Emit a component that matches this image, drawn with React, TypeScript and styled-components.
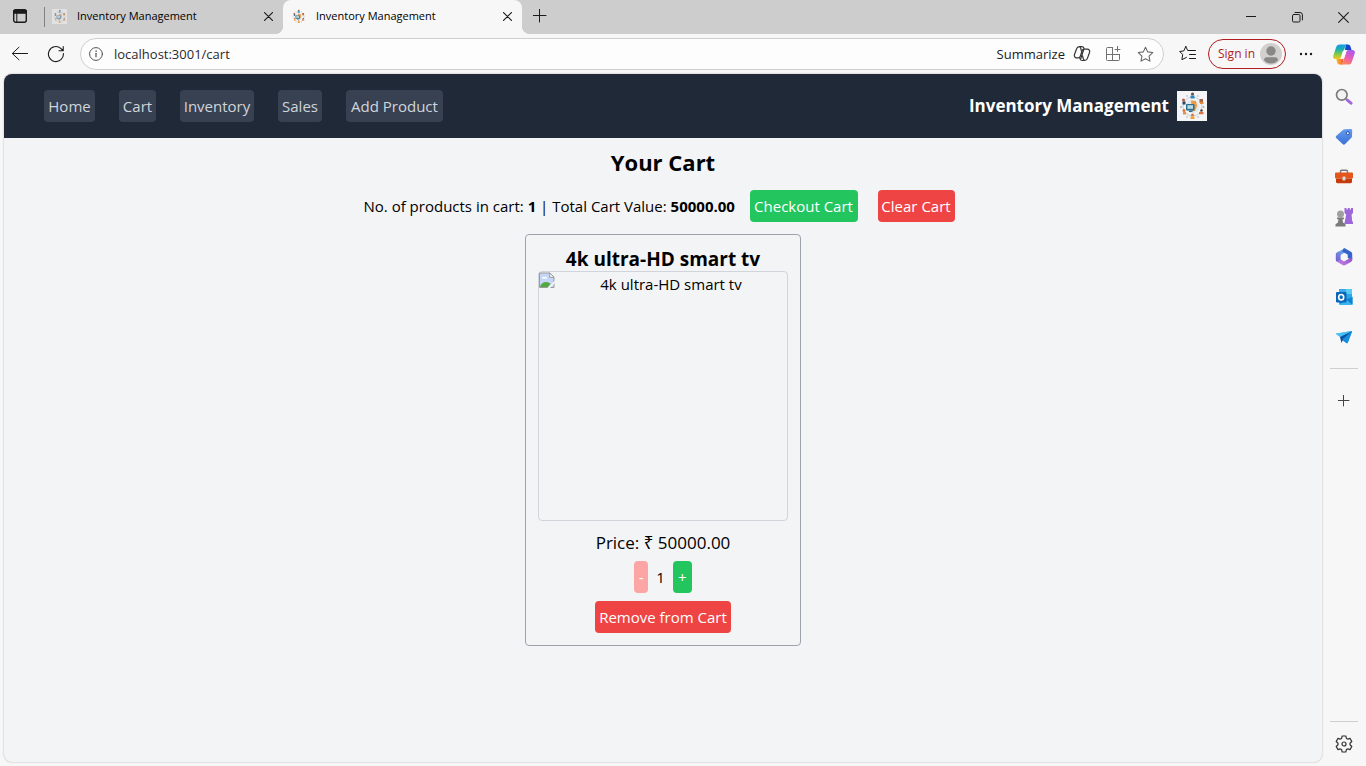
import React from "react";
import styled, { createGlobalStyle } from "styled-components";

const GlobalStyle = createGlobalStyle`
  *, *::before, *::after { box-sizing: border-box; }
  body {
    margin: 0;
    background: #f7f7f7;
    color: #000;
    font-family: "Segoe UI", "Open Sans", "Noto Sans", sans-serif;
    font-size: 15px;
    line-height: 24px;
  }
  button, input { font: inherit; color: inherit; }
  button { border: 0; padding: 0; background: none; cursor: pointer; }
  svg { display: block; flex: none; }
  h1, h2, p, figure { margin: 0; }
`;

/* ---------- browser frame ---------- */

const Window = styled.div`
  min-height: 100vh;
  display: flex;
  flex-direction: column;
`;

const TabStrip = styled.header`
  display: flex;
  height: 34px;
  background: #cdcdcd;
`;

const TabGroup = styled.div`
  display: flex;
  flex: 1;
  min-width: 0;
  margin-left: 4px;
`;

const IconButton = styled.button<{ $width: number; $height?: number }>`
  display: flex;
  align-items: center;
  justify-content: center;
  flex: none;
  width: ${(p) => p.$width}px;
  height: ${(p) => p.$height ?? 32}px;
`;

const Tab = styled.div<{ $active?: boolean }>`
  position: relative;
  display: flex;
  align-items: center;
  flex: 0 1 239px;
  gap: 10px;
  padding: 0 8px 2px;
  font-size: 11px;
  line-height: 16px;
  background: ${(p) => (p.$active ? "#f7f7f7" : "transparent")};
  border-radius: 8px 8px 0 0;

  &::before,
  &::after {
    content: "";
    display: ${(p) => (p.$active ? "block" : "none")};
    position: absolute;
    bottom: 0;
    width: 8px;
    height: 8px;
  }
  &::before {
    right: 100%;
    background: radial-gradient(circle at 0 0, transparent 8px, #f7f7f7 8px);
  }
  &::after {
    left: 100%;
    background: radial-gradient(circle at 100% 0, transparent 8px, #f7f7f7 8px);
  }
`;

const TabTitle = styled.span`
  flex: 1;
  min-width: 0;
  overflow: hidden;
  white-space: nowrap;
`;

const TabDivider = styled.span`
  align-self: center;
  width: 1px;
  height: 20px;
  margin-right: -1px;
  background: #808080;
`;

const Favicon = styled.span<{ $faded?: boolean }>`
  opacity: ${(p) => (p.$faded ? 0.6 : 1)};
`;

const Toolbar = styled.div`
  display: flex;
  align-items: center;
  height: 40px;
  padding-left: 2px;
`;

const AddressBar = styled.form`
  display: flex;
  align-items: center;
  flex: 1;
  min-width: 0;
  height: 32px;
  margin: 0 8px 0 6px;
  padding: 0 2px 0 0;
  background: #fdfdfd;
  border: 1px solid #cfcfcf;
  border-radius: 16px;
`;

const AddressInput = styled.input`
  flex: 1;
  min-width: 0;
  padding: 0 3px;
  border: 0;
  outline: 0;
  background: none;
  color: #2b2b2b;
  font-size: 13px;
`;

const SummarizeButton = styled.button`
  display: flex;
  align-items: center;
  gap: 8px;
  padding-right: 6px;
  font-size: 13px;
  color: #1b1b1b;
`;

const SignInButton = styled.button`
  display: flex;
  align-items: center;
  justify-content: space-between;
  width: 78px;
  height: 30px;
  margin: 0 4px;
  padding: 0 3px 0 9px;
  border: 1px solid #b01c20;
  border-radius: 15px;
  color: #b01c20;
  font-size: 12px;
  white-space: nowrap;
`;

const Body = styled.div`
  display: flex;
  flex: 1;
`;

const Sidebar = styled.aside`
  display: flex;
  flex-direction: column;
  align-items: center;
  width: 44px;
  padding: 3px 0 2px;
`;

const SidebarRule = styled.hr`
  width: 28px;
  height: 1px;
  margin: 11px 0 12px;
  border: 0;
  background: #cfcfcf;
`;

const SidebarFooter = styled.div`
  display: flex;
  flex-direction: column;
  align-items: center;
  margin-top: auto;
  ${SidebarRule} { margin: 0 0 2px; }
`;

/* ---------- page ---------- */

const Page = styled.div`
  flex: 1;
  min-width: 0;
  margin: 0 0 4px 4px;
  overflow: hidden;
  background: #f3f4f6;
  border-radius: 8px;
  box-shadow: 0 0 2px rgba(0, 0, 0, 0.3);
`;

const NavBar = styled.nav`
  display: flex;
  align-items: center;
  justify-content: space-between;
  height: 64px;
  padding: 0 115px 0 40px;
  background: #1f2937;
`;

const NavList = styled.div`
  display: flex;
  gap: 24px;
`;

const NavLink = styled.a<{ $width: number }>`
  display: block;
  min-width: ${(p) => p.$width}px;
  padding: 4px 0;
  border-radius: 4px;
  background: #374151;
  color: #d1d5db;
  text-align: center;
  text-decoration: none;
  white-space: nowrap;
`;

const Brand = styled.div`
  display: flex;
  align-items: center;
  gap: 8px;
  color: #fff;
  font-size: 17px;
  font-weight: 700;
  line-height: 28px;
  white-space: nowrap;
`;

const Main = styled.main`
  display: flex;
  flex-direction: column;
  align-items: center;
  gap: 12px;
  padding-top: 8px;
`;

const Title = styled.h1`
  font-size: 22px;
  line-height: 32px;
  font-weight: 700;
`;

const Summary = styled.div`
  display: flex;
  align-items: center;
  gap: 12px;
`;

const SummaryText = styled.p`
  min-width: 374px;
`;

const SummaryActions = styled.div`
  display: flex;
  gap: 20px;
  padding-right: 8px;
`;

const ActionButton = styled.button<{ $tone: "green" | "red"; $width: number }>`
  min-width: ${(p) => p.$width}px;
  height: 32px;
  border-radius: 4px;
  background: ${(p) => (p.$tone === "green" ? "#22c55e" : "#ef4444")};
  color: #fff;
  white-space: nowrap;
  &:disabled { background: #fca5a5; cursor: not-allowed; }
`;

const Card = styled.article`
  display: flex;
  flex-direction: column;
  align-items: center;
  padding: 12px;
  border: 1px solid #9ca3af;
  border-radius: 4px;
`;

const ProductName = styled.h2`
  font-size: 19px;
  line-height: 24px;
  font-weight: 700;
`;

const ProductImage = styled.figure`
  display: flex;
  width: 250px;
  height: 250px;
  border: 1px solid #d1d5db;
  border-radius: 4px;
`;

const AltText = styled.figcaption`
  flex: 1;
  text-align: center;
`;

const Price = styled.p`
  margin: 8px 0 4px;
  font-size: 17px;
  line-height: 28px;
`;

const Quantity = styled.div`
  display: flex;
  align-items: center;
  gap: 8px;
  margin-bottom: 8px;
`;

/* ---------- icons ---------- */

const line = { fill: "none", stroke: "#1b1b1b", strokeLinecap: "round", strokeLinejoin: "round" } as const;

const TabActionsIcon = () => (
  <svg width="16" height="16" viewBox="0 0 16 16" {...line} strokeWidth="1.4">
    <rect x="1.7" y="1.7" width="12.6" height="12.6" rx="2" />
    <path d="M2 2.5h12v2.6H2z" fill="#1b1b1b" />
    <path d="M4.8 5v9" strokeWidth="1" />
  </svg>
);

const CloseIcon = ({ size = 9 }: { size?: number }) => (
  <svg width={size} height={size} viewBox="0 0 10 10" {...line} strokeWidth={size > 9 ? 1 : 1.3}>
    <path d="M.6.6l8.8 8.8M9.4.6L.6 9.4" />
  </svg>
);

const PlusIcon = ({ size = 14, color = "#1b1b1b" }: { size?: number; color?: string }) => (
  <svg width={size} height={size} viewBox={`0 0 ${size} ${size}`} {...line} stroke={color}>
    <path d={`M${Math.floor(size / 2) - 0.5} 0v${size - 1}M0 ${Math.floor(size / 2) - 0.5}h${size - 1}`} />
  </svg>
);

const MinimizeIcon = () => (
  <svg width="10" height="10" viewBox="0 0 10 10" {...line}><path d="M0 4.5h10" /></svg>
);

const RestoreIcon = () => (
  <svg width="11" height="11" viewBox="0 0 11 11" {...line}>
    <rect x=".5" y="2.5" width="7.5" height="7.5" rx="1.2" />
    <path d="M3 .5h5a2.4 2.4 0 012.4 2.4v5" />
  </svg>
);

const BackIcon = () => (
  <svg width="18" height="16" viewBox="0 0 18 16" {...line} strokeWidth="1">
    <path d="M16.500 7.500H1.500M8 1.200L1.300 7.500 8 13.800" />
  </svg>
);

const RefreshIcon = () => (
  <svg width="18" height="18" viewBox="0 0 18 18" {...line} strokeWidth="1.1">
    <path d="M16.400 8.500a7.500 7.500 0 11-2.700-5.200l2.300 2.200M16.200 1.500v4.200h-4.200" />
  </svg>
);

const InfoIcon = () => (
  <svg width="14" height="14" viewBox="0 0 14 14" {...line} stroke="#555">
    <circle cx="7" cy="7" r="6.4" />
    <path d="M7 6.3v3.500" strokeWidth="1.2" />
    <circle cx="7" cy="4.1" r=".4" fill="#555" strokeWidth=".6" />
  </svg>
);

const CopilotOutlineIcon = () => (
  <svg width="18" height="18" viewBox="0 0 18 18" {...line} stroke="#333" strokeWidth="1.2">
    <path d="M11.2 4.2L10.8 3a2 2 0 00-1.9-1.4H6.4A3 3 0 003.6 3.700L1.400 9.800a2.300 2.300 0 002.200 3h1.500a2.300 2.300 0 002.200-1.600l1.900-5.700a2 2 0 011.900-1.300h3.300a2.300 2.300 0 012.200 3l-2.200 6.200a3 3 0 01-2.800 2.100H9.100a2 2 0 01-1.900-1.400l-.4-1.300" />
    <path d="M10.7 4.500L7.800 13.500M6.700 1.800c.9.500 1.100 1.400 1.300 2.400l.4 2M11.300 15.300c-.9-.5-1.100-1.400-1.300-2.400l-.4-2" />
  </svg>
);

const AppsIcon = () => (
  <svg width="16" height="16" viewBox="0 0 16 16" {...line} stroke="#707070">
    <path d="M7.500 1.500H2.500A1 1 0 001.500 2.500v11a1 1 0 001 1h11a1 1 0 001-1V8.500M7.500 1.500v13M1.500 8.500h13M12.500.5v5M10 3.500h5" />
  </svg>
);

const starPath = "M8 1.200l2.050 4.350 4.750.65-3.450 3.300.85 4.750L8 11.950l-4.200 2.300.85-4.750L1.200 6.200l4.750-.65z";

const StarIcon = () => (
  <svg width="17" height="17" viewBox="0 0 16 16" {...line} stroke="#666"><path d={starPath} /></svg>
);

const FavoritesIcon = () => (
  <svg width="18" height="18" viewBox="0 0 18 18" {...line} strokeWidth="1">
    <path d="M6.800 1.500L4.800 5.900l-4.100.6 3 3-.8 5.200 4.500-2.300M6.800 1.500L8.700 5.500h7.800M10.500 9.500h6M10.500 13.500h6" />
  </svg>
);

const AvatarIcon = () => (
  <svg width="22" height="22" viewBox="0 0 22 22">
    <circle cx="11" cy="11" r="11" fill="#d2d0ce" />
    <circle cx="11" cy="8" r="4.700" fill="#8a8886" />
    <path d="M4 17.200c0-1.800 1.200-3 3-3h8c1.800 0 3 1.200 3 3-1.600 2-4 3.300-7 3.300s-5.400-1.300-7-3.300z" fill="#8a8886" />
  </svg>
);

const DotsIcon = () => (
  <svg width="14" height="4" viewBox="0 0 14 4" fill="#1b1b1b">
    <circle cx="2" cy="2" r="1.200" /><circle cx="7" cy="2" r="1.200" /><circle cx="12" cy="2" r="1.200" />
  </svg>
);

const CopilotIcon = () => (
  <svg width="22" height="21" viewBox="0 0 24 22">
    <defs>
      <linearGradient id="cp-left" x1="0" y1="0" x2="0" y2="1">
        <stop offset="0" stopColor="#1599e8" /><stop offset=".35" stopColor="#1db2b0" />
        <stop offset=".65" stopColor="#7fca4a" /><stop offset="1" stopColor="#f6c91d" />
      </linearGradient>
      <linearGradient id="cp-right" x1=".8" y1="0" x2=".3" y2="1">
        <stop offset="0" stopColor="#9f5cf2" /><stop offset=".5" stopColor="#e85ab8" /><stop offset="1" stopColor="#ff8a55" />
      </linearGradient>
      <linearGradient id="cp-bottom" x1="0" y1="0" x2="1" y2="0">
        <stop offset="0" stopColor="#f8c22d" /><stop offset="1" stopColor="#f4503c" />
      </linearGradient>
    </defs>
    <path d="M14 0h2.200c1.500 0 2.500.9 2.900 2.300L20.200 6h-3.500c-1.600 0-2.600.8-3.100 2.300L12 13z" fill="#1746c9" />
    <path d="M7.500 22c-1.600 0-2.500-.9-3-2.400L3.500 16h4.200c1.600 0 2.500-.8 3-2.400l1.600-4.800L10.500 22z" fill="url(#cp-bottom)" />
    <path d="M7.300 0h8.900c-1.700 0-2.500 1.200-3.100 3l-3.400 10.500C9.100 15.300 8.300 16 6.700 16H2.900C.8 16-.3 14.500.3 12.400L3.500 2.900C4.200 1 5.400 0 7.300 0z" fill="url(#cp-left)" />
    <path d="M16.700 22H7.800c1.700 0 2.500-1.200 3.100-3l3.400-10.500C14.900 6.700 15.700 6 17.300 6h3.800c2.100 0 3.200 1.500 2.600 3.600l-3.200 9.500c-.7 1.900-1.900 2.900-3.800 2.900z" fill="url(#cp-right)" />
    <path d="M10.200 8.700c.5-1.600 1.300-2.700 3-2.700h2.400c-.7.600-1 1.300-1.300 2.500l-1.500 4.800c-.5 1.600-1.300 2.700-3 2.700H7.600c.7-.6 1-1.300 1.300-2.500z" fill="#fbfbfd" />
  </svg>
);

const SearchIcon = () => (
  <svg width="18" height="18" viewBox="0 0 18 18">
    <circle cx="6.800" cy="6.800" r="5.300" fill="#f3f3f5" stroke="#7b7b7b" strokeWidth="1.700" />
    <path d="M10.800 10.800l1.500 1.500" stroke="#7b7b7b" strokeWidth="1.500" />
    <path d="M12.400 12.200l3.600 3" stroke="#a068d8" strokeWidth="3" strokeLinecap="round" />
  </svg>
);

const TagIcon = () => (
  <svg width="18" height="18" viewBox="0 0 18 18">
    <defs>
      <linearGradient id="tag" x1="0" y1="0" x2="0" y2="1"><stop offset="0" stopColor="#659cf0" /><stop offset="1" stopColor="#3c70d4" /></linearGradient>
    </defs>
    <path d="M9.600 1.200l6-.3c1 0 1.600.6 1.600 1.600l-.2 5.800c0 .6-.2 1-.6 1.400l-6.300 6.400c-.8.800-1.700.8-2.500 0L1.400 10.300c-.8-.8-.8-1.700 0-2.500l6.800-6c.4-.4.8-.6 1.400-.6z" fill="url(#tag)" />
    <circle cx="12.800" cy="5.200" r="1.500" fill="#fff" stroke="#234a99" strokeWidth="1" />
  </svg>
);

const ToolboxIcon = () => (
  <svg width="18" height="16" viewBox="0 0 18 16">
    <path d="M5.500 4V2.500c0-.8.5-1.300 1.300-1.300h4.400c.8 0 1.300.5 1.300 1.300V4" fill="none" stroke="#777" strokeWidth="1.400" />
    <rect x="0" y="3.500" width="18" height="6" rx="1" fill="#e2571c" />
    <path d="M1 9.500h16v3.300c0 .9-.5 1.400-1.400 1.400H2.400c-.9 0-1.400-.5-1.400-1.400z" fill="#c63b0b" />
    <rect x="7.500" y="7.500" width="3" height="4" rx="1" fill="#dedede" />
  </svg>
);

const GamesIcon = () => (
  <svg width="18" height="19" viewBox="0 0 18 19">
    <path d="M9.500 0h2v1.500h1.300V0h2v1.500H16V0h2v5l-1.500 1.500.7 6.500 1 1.500v1.500H9.300l1.900-9.500L9.500 5z" fill="#9b67d9" />
    <circle cx="5.500" cy="6" r="3.500" fill="#a0a0a0" />
    <path d="M2 9.500h7v1.700H7.500l.5 3.300 2.500 1.700v2.300H.5v-2.300L3 14.500l.5-3.300H2z" fill="#7a7a7a" />
  </svg>
);

const Microsoft365Icon = () => (
  <svg width="18" height="18" viewBox="0 0 18 18">
    <defs>
      <linearGradient id="m-a" x1="1" y1="0" x2="0" y2="1"><stop offset="0" stopColor="#62c5f2" /><stop offset="1" stopColor="#7a55d0" /></linearGradient>
      <linearGradient id="m-c" x1="0" y1="1" x2="1" y2="0"><stop offset="0" stopColor="#c984e8" /><stop offset="1" stopColor="#8950c8" /></linearGradient>
    </defs>
    <path d="M9.500.5L2.200 4.300C1.200 4.900.8 5.500.8 6.600v5.200c0 1 .6 1.600 1.500 2.100l3.500-2.100V6.700l5.500-3z" fill="url(#m-a)" />
    <path d="M8.500.5c.8-.3 1.400-.2 2.100.2l5.300 3.100c.9.500 1.300 1.200 1.300 2.200v6l-4.500-2V6.500L7 3.600z" fill="#3564cb" />
    <path d="M2 13.700l5.500 3.400c1 .6 2 .6 3 0l5.400-3.100c.9-.5 1.300-1.100 1.300-2.200V9l-4.700 2.500L9 13.400l-3.200-2z" fill="url(#m-c)" />
    <path d="M9 5.600l3.200 1.800v3.400L9 12.600l-3.200-1.800V7.400z" fill="#f7f7f7" />
  </svg>
);

const OutlookIcon = () => (
  <svg width="18" height="18" viewBox="0 0 18 18">
    <rect x="4" y="1" width="13" height="15" rx="1" fill="#1c8ddd" />
    <path d="M4 1h6.500v5H4z" fill="#3fa8e8" /><path d="M10.500 1H16a1 1 0 011 1v4h-6.500z" fill="#57cdf5" />
    <path d="M10.500 6H17v5h-6.500z" fill="#2aa9ea" />
    <path d="M3.500 17L17.500 8.500V16a1 1 0 01-1 1z" fill="#36b5ef" /><path d="M11 11.500l6.500 5.300V9z" fill="#1381cf" />
    <rect x="1" y="4" width="10.500" height="10.500" rx="1" fill="#0a66b8" />
    <ellipse cx="6.200" cy="9.200" rx="2.500" ry="2.700" fill="none" stroke="#fff" strokeWidth="1.600" />
  </svg>
);

const PlaneIcon = () => (
  <svg width="18" height="16" viewBox="0 0 18 16">
    <path d="M.7 4.700L16.400 1.900c.6-.1.900.2.700.8l-4.200 10.700c-.3.800-.8.900-1.500.5l-4-2.500L5 7.500z" fill="#28a5e8" />
    <path d="M.7 4.700L17 2 5.400 8.300z" fill="#48c0f5" />
    <path d="M5 7.900L17 2.200 8.300 10 6.500 14z" fill="#0a4f9f" />
    <path d="M7.400 10.500L17 2.200l-4.200 11.400c-.3.700-.8.700-1.300.400z" fill="#188ddd" />
  </svg>
);

const GearIcon = () => (
  <svg width="18" height="18" viewBox="0 0 18 18" {...line} stroke="#333" strokeWidth="1.200">
    <path d="M7.200 1h3.600l.6 2.400 1.200.7 2.400-.7 1.800 3.100L15 8.200v1.600l1.800 1.700-1.800 3.100-2.400-.7-1.200.7-.6 2.400H7.200l-.6-2.400-1.200-.7-2.400.7-1.800-3.100L3 9.800V8.200L1.200 6.500 3 3.400l2.400.7 1.200-.7z" />
    <circle cx="9" cy="9" r="2" />
  </svg>
);

const BrokenImageIcon = () => (
  <svg width="16" height="16" viewBox="0 0 16 16">
    <path d="M.5 1h10.200L15 5.300V15.500H.5z" fill="#c5d6f7" stroke="#999" />
    <path d="M10.700 1v4.300H15z" fill="#fff" stroke="#999" />
    <path d="M3 6.500a1.500 1.500 0 012.600-1.200A1.400 1.400 0 018 6.500z" fill="#fff" />
    <path d="M1 15c.5-3 3-5 6-5 2 0 3.600.8 4.600 2L9 15z" fill="#53a93f" />
    <path d="M16 8.500L8.500 16H11l5-5z" fill="#f3f4f6" />
  </svg>
);

/* A round team diagram: people and goods placed round a monitor. */
const LogoIcon = ({ size, background }: { size: number; background?: string }) => (
  <svg width={size} height={size} viewBox="0 0 30 30">
    {background && <rect width="30" height="30" fill={background} />}
    <circle cx="15.500" cy="15.500" r="9.500" fill="none" stroke="#c9cfd5" strokeWidth="1" />
    <circle cx="15.500" cy="15.500" r="7" fill="#e4e8ea" />
    <path d="M14 9.500l5 .5 1 5-2 5h-3z" fill="#eb9a45" />
    <rect x="9" y="13" width="8.500" height="6.500" rx="1" fill="#2c6f90" />
    <rect x="10.400" y="14.200" width="5.600" height="3.600" fill="#b9dbe6" />
    <path d="M12 19.500h3.500V21H12z" fill="#2c6f90" />
    <circle cx="15.500" cy="3" r="1.500" fill="#75452e" /><path d="M13.500 4.500h4v3h-4z" fill="#2c88bc" />
    <circle cx="6.500" cy="9" r="1.500" fill="#b55d42" /><path d="M5.500 10.500h3v3h-3z" fill="#30455b" />
    <path d="M22.500 8h3.500v4h-3.500z" fill="#a5684a" /><path d="M23 11h3.500v2H23z" fill="#e88a3b" />
    <circle cx="7" cy="19.500" r="1.500" fill="#d97a39" /><path d="M6 21h3v2.500H6z" fill="#e5924f" />
    <circle cx="24.500" cy="19.500" r="1.300" fill="#5b4439" /><path d="M22 21h4.500v2.300H22z" fill="#e27243" />
    <circle cx="15.500" cy="24" r="1.500" fill="#d97a39" /><path d="M13.500 25.500h4V28h-4z" fill="#eea23e" />
    <g fill="#a8adb2">
      <circle cx="10" cy="5" r=".8" /><circle cx="21" cy="5" r=".8" /><circle cx="4" cy="16" r=".9" />
      <circle cx="26.500" cy="16" r=".9" /><circle cx="10" cy="26" r=".8" /><circle cx="21" cy="26" r=".8" />
    </g>
  </svg>
);

/* ---------- data ---------- */

const links = [
  { label: "Home", width: 51 },
  { label: "Cart", width: 37 },
  { label: "Inventory", width: 74 },
  { label: "Sales", width: 44 },
  { label: "Add Product", width: 97 },
];

const sidebarApps = [
  { label: "Search", Icon: SearchIcon },
  { label: "Shopping", Icon: TagIcon },
  { label: "Tools", Icon: ToolboxIcon },
  { label: "Games", Icon: GamesIcon },
  { label: "Microsoft 365", Icon: Microsoft365Icon },
  { label: "Outlook", Icon: OutlookIcon },
  { label: "Drop", Icon: PlaneIcon },
];

export default function App() {
  return (
    <Window>
      <GlobalStyle />
      <TabStrip>
        <IconButton $width={40} aria-label="Tab actions"><TabActionsIcon /></IconButton>
        <TabGroup>
          <TabDivider />
          <Tab>
            <Favicon $faded><LogoIcon size={15} background="#f0f0f0" /></Favicon>
            <TabTitle>Inventory Management</TabTitle>
            <IconButton $width={14} aria-label="Close tab"><CloseIcon /></IconButton>
          </Tab>
          <Tab $active>
            <Favicon><LogoIcon size={15} /></Favicon>
            <TabTitle>Inventory Management</TabTitle>
            <IconButton $width={14} aria-label="Close tab"><CloseIcon /></IconButton>
          </Tab>
          <IconButton $width={36} aria-label="New tab"><PlusIcon /></IconButton>
        </TabGroup>
        <IconButton $width={46} $height={34} aria-label="Minimize"><MinimizeIcon /></IconButton>
        <IconButton $width={46} $height={34} aria-label="Restore"><RestoreIcon /></IconButton>
        <IconButton $width={46} $height={34} aria-label="Close"><CloseIcon size={11} /></IconButton>
      </TabStrip>

      <Toolbar>
        <IconButton $width={36} aria-label="Back"><BackIcon /></IconButton>
        <IconButton $width={36} aria-label="Refresh"><RefreshIcon /></IconButton>
        <AddressBar onSubmit={(e) => e.preventDefault()}>
          <IconButton type="button" $width={30} $height={30} aria-label="Site information"><InfoIcon /></IconButton>
          <AddressInput aria-label="Address" defaultValue="localhost:3001/cart" />
          <SummarizeButton type="button">Summarize <CopilotOutlineIcon /></SummarizeButton>
          <IconButton type="button" $width={32} $height={30} aria-label="Apps"><AppsIcon /></IconButton>
          <IconButton type="button" $width={32} $height={30} aria-label="Add to favorites"><StarIcon /></IconButton>
        </AddressBar>
        <IconButton $width={32} aria-label="Favorites"><FavoritesIcon /></IconButton>
        <SignInButton>Sign in <AvatarIcon /></SignInButton>
        <IconButton $width={32} aria-label="Settings and more"><DotsIcon /></IconButton>
        <IconButton $width={44} aria-label="Copilot"><CopilotIcon /></IconButton>
      </Toolbar>

      <Body>
        <Page>
          <NavBar>
            <NavList>
              {links.map(({ label, width }) => (
                <NavLink key={label} href="#" $width={width}>{label}</NavLink>
              ))}
            </NavList>
            <Brand>Inventory Management <LogoIcon size={30} background="#f5f5f7" /></Brand>
          </NavBar>
          <Main>
            <Title>Your Cart</Title>
            <Summary>
              <SummaryText>No. of products in cart: <b>1</b> | Total Cart Value: <b>50000.00</b></SummaryText>
              <SummaryActions>
                <ActionButton $tone="green" $width={108}>Checkout Cart</ActionButton>
                <ActionButton $tone="red" $width={77}>Clear Cart</ActionButton>
              </SummaryActions>
            </Summary>
            <Card>
              <ProductName>4k ultra-HD smart tv</ProductName>
              <ProductImage>
                <BrokenImageIcon />
                <AltText>4k ultra-HD smart tv</AltText>
              </ProductImage>
              <Price>Price: ₹ 50000.00</Price>
              <Quantity>
                <ActionButton $tone="red" $width={14} disabled>-</ActionButton>
                <span>1</span>
                <ActionButton $tone="green" $width={19}>+</ActionButton>
              </Quantity>
              <ActionButton $tone="red" $width={136}>Remove from Cart</ActionButton>
            </Card>
          </Main>
        </Page>

        <Sidebar>
          {sidebarApps.map(({ label, Icon }) => (
            <IconButton key={label} $width={40} $height={40} aria-label={label}><Icon /></IconButton>
          ))}
          <SidebarRule />
          <IconButton $width={40} $height={40} aria-label="Customize"><PlusIcon size={12} color="#444" /></IconButton>
          <SidebarFooter>
            <SidebarRule />
            <IconButton $width={40} $height={40} aria-label="Settings"><GearIcon /></IconButton>
          </SidebarFooter>
        </Sidebar>
      </Body>
    </Window>
  );
}
